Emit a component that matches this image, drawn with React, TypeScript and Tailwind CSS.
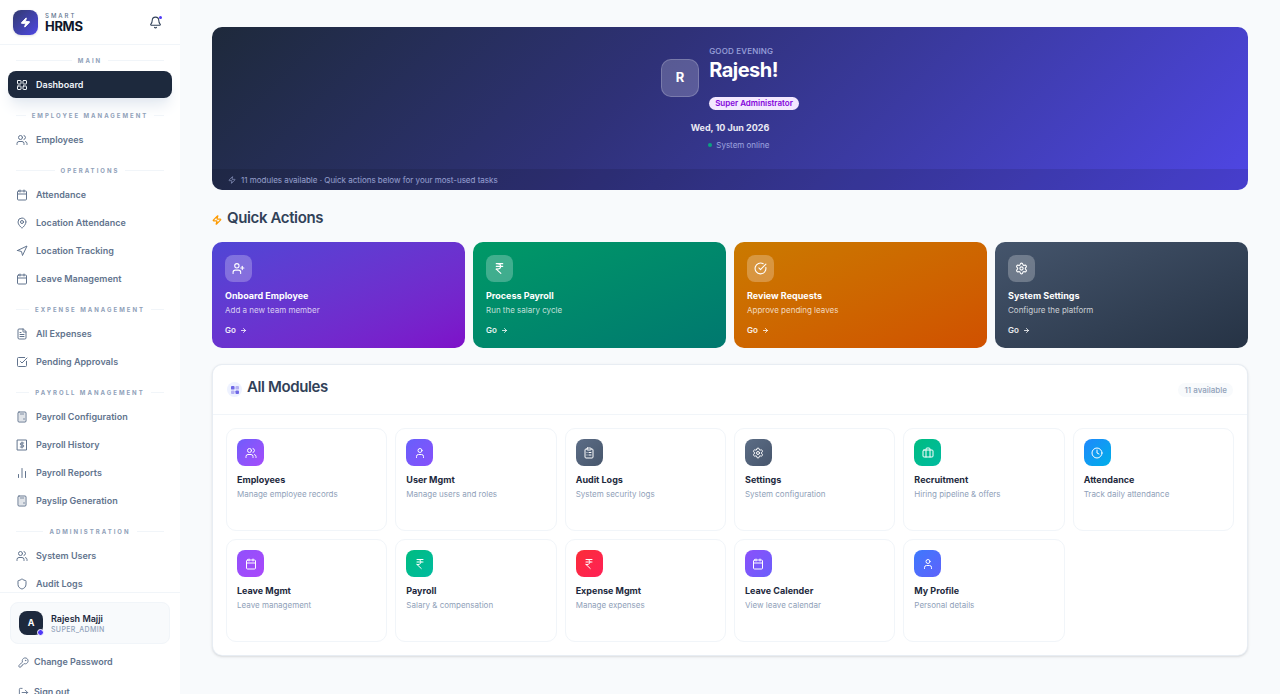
import {
  ArrowRight,
  Bell,
  Briefcase,
  Calculator,
  Calendar,
  ChartNoAxesColumn,
  CircleCheckBig,
  ClipboardList,
  Clock,
  FileText,
  IndianRupee,
  KeyRound,
  LayoutGrid,
  LogOut,
  MapPin,
  Navigation,
  Settings,
  Shield,
  SquareCheckBig,
  User,
  UserPlus,
  Users,
  Zap,
  type LucideIcon,
} from "lucide-react"
import type { ComponentType } from "react"

type IconType = LucideIcon | ComponentType<{ className?: string }>

const PayHistoryIcon = ({ className }: { className?: string }) => (
  <svg
    viewBox="0 0 24 24"
    fill="none"
    stroke="currentColor"
    strokeWidth="2"
    strokeLinecap="round"
    strokeLinejoin="round"
    className={className}
    aria-hidden="true"
  >
    <path d="M3 2h18v20H3z" />
    <path d="M15.5 8h-5a2 2 0 0 0 0 4h3a2 2 0 0 1 0 4h-5" />
    <path d="M12 6v12" />
  </svg>
)

const menu: { title: string; items: { label: string; icon: IconType }[] }[] = [
  { title: "Main", items: [{ label: "Dashboard", icon: LayoutGrid }] },
  {
    title: "Employee Management",
    items: [{ label: "Employees", icon: Users }],
  },
  {
    title: "Operations",
    items: [
      { label: "Attendance", icon: Calendar },
      { label: "Location Attendance", icon: MapPin },
      { label: "Location Tracking", icon: Navigation },
      { label: "Leave Management", icon: Calendar },
    ],
  },
  {
    title: "Expense Management",
    items: [
      { label: "All Expenses", icon: FileText },
      { label: "Pending Approvals", icon: SquareCheckBig },
    ],
  },
  {
    title: "Payroll Management",
    items: [
      { label: "Payroll Configuration", icon: Calculator },
      { label: "Payroll History", icon: PayHistoryIcon },
      { label: "Payroll Reports", icon: ChartNoAxesColumn },
      { label: "Payslip Generation", icon: Calculator },
    ],
  },
  {
    title: "Administration",
    items: [
      { label: "System Users", icon: Users },
      { label: "Audit Logs", icon: Shield },
    ],
  },
]

const quickActions: {
  title: string
  text: string
  icon: IconType
  color: string
}[] = [
  {
    title: "Onboard Employee",
    text: "Add a new team member",
    icon: UserPlus,
    color: "from-[#4f46d5] to-[#7e0fc9]",
  },
  {
    title: "Process Payroll",
    text: "Run the salary cycle",
    icon: IndianRupee,
    color: "from-[#009966] to-[#00786f]",
  },
  {
    title: "Review Requests",
    text: "Approve pending leaves",
    icon: CircleCheckBig,
    color: "from-[#ca7a00] to-[#d05000]",
  },
  {
    title: "System Settings",
    text: "Configure the platform",
    icon: Settings,
    color: "from-[#45556c] to-[#263345]",
  },
]

const modules: {
  title: string
  text: string
  icon: IconType
  color: string
}[] = [
  {
    title: "Employees",
    text: "Manage employee records",
    icon: Users,
    color: "from-[#6f5cfb] to-[#a44bfb]",
  },
  {
    title: "User Mgmt",
    text: "Manage users and roles",
    icon: User,
    color: "from-[#675ffb] to-[#8650fb]",
  },
  {
    title: "Audit Logs",
    text: "System security logs",
    icon: ClipboardList,
    color: "from-[#5c6d86] to-[#47566c]",
  },
  {
    title: "Settings",
    text: "System configuration",
    icon: Settings,
    color: "from-[#5c6d86] to-[#47566c]",
  },
  {
    title: "Recruitment",
    text: "Hiring pipeline & offers",
    icon: Briefcase,
    color: "from-[#00bc80] to-[#00bba0]",
  },
  {
    title: "Attendance",
    text: "Track daily attendance",
    icon: Clock,
    color: "from-[#1e88fc] to-[#00aee8]",
  },
  {
    title: "Leave Mgmt",
    text: "Leave management",
    icon: Calendar,
    color: "from-[#9050fb] to-[#aa48fb]",
  },
  {
    title: "Payroll",
    text: "Salary & compensation",
    icon: IndianRupee,
    color: "from-[#00bc80] to-[#00bba0]",
  },
  {
    title: "Expense Mgmt",
    text: "Manage expenses",
    icon: IndianRupee,
    color: "from-[#fb2c36] to-[#ff2056]",
  },
  {
    title: "Leave Calender",
    text: "View leave calendar",
    icon: Calendar,
    color: "from-[#8a50fb] to-[#6a5efb]",
  },
  {
    title: "My Profile",
    text: "Personal details",
    icon: User,
    color: "from-[#3b78fd] to-[#5d62fb]",
  },
]

const Sidebar = () => {
  return (
    <aside className="-mb-3 flex w-[180px] shrink-0 flex-col bg-white">
      <div className="flex h-[45px] shrink-0 items-center border-b border-slate-100 pr-[18px] pl-[13px]">
        <div className="flex size-[25px] items-center justify-center rounded-lg bg-linear-to-br from-[#33396f] to-[#4f46e5] shadow-sm">
          <Zap className="size-[11px] fill-white text-white" />
        </div>
        <div className="ml-[7px] flex-1">
          <p className="text-[6px] leading-[8px] font-medium tracking-[2px] text-slate-500 uppercase">
            Smart
          </p>
          <p className="text-[13px] leading-[13px] font-bold tracking-tight text-slate-900">
            HRMS
          </p>
        </div>
        <button aria-label="Notifications" className="relative text-slate-700">
          <Bell className="size-[13px]" />
          <span className="absolute top-0 right-0 size-[3px] rounded-full bg-indigo-600" />
        </button>
      </div>

      <nav className="min-h-0 flex-1 overflow-y-auto px-2 [scrollbar-width:none]">
        {menu.map((group) => (
          <div key={group.title} className="pt-3 first:pt-[10px]">
            <div className="mb-[5px] flex h-[11px] items-center gap-[6px] px-2">
              <span className="h-px flex-1 bg-slate-100" />
              <h2 className="text-[6px] leading-[11px] font-bold tracking-[2px] whitespace-nowrap text-slate-400 uppercase">
                {group.title}
              </h2>
              <span className="h-px flex-1 bg-slate-100" />
            </div>
            <div className="flex flex-col gap-px">
              {group.items.map((item) => (
                <a
                  key={item.label}
                  href="#"
                  className={
                    item.label === "Dashboard"
                      ? "flex h-[27px] items-center gap-2 rounded-lg bg-slate-800 px-2 text-[9px] font-semibold text-slate-100 shadow-lg shadow-slate-200"
                      : "flex h-[27px] items-center gap-2 rounded-lg px-2 text-[9px] font-semibold text-slate-500"
                  }
                >
                  <item.icon className="size-3" />
                  {item.label}
                </a>
              ))}
            </div>
          </div>
        ))}
      </nav>

      <div className="flex shrink-0 flex-col border-t border-slate-100 px-[10px] pt-[9px]">
        <div className="flex h-[42px] items-center gap-2 rounded-lg border border-slate-100 bg-slate-50 px-2">
          <div className="relative flex size-6 items-center justify-center rounded-lg bg-slate-800 text-[9px] font-bold text-white">
            A
            <span className="absolute -right-px -bottom-px size-[7px] rounded-full border border-white bg-indigo-600" />
          </div>
          <div>
            <p className="text-[9px] leading-[12px] font-semibold text-slate-800">
              Rajesh Majji
            </p>
            <p className="text-[7px] leading-[9px] font-medium tracking-wider text-slate-400">
              SUPER_ADMIN
            </p>
          </div>
        </div>
        <button className="mt-1 flex h-[28px] items-center gap-[5px] px-2 text-[9px] font-semibold text-slate-500">
          <KeyRound className="size-[11px]" />
          Change Password
        </button>
        <button className="mt-[2px] flex h-[28px] items-center gap-[5px] px-2 text-[9px] font-semibold text-slate-500">
          <LogOut className="size-[11px]" />
          Sign out
        </button>
      </div>
    </aside>
  )
}

const Hero = () => {
  return (
    <section className="overflow-hidden rounded-[10px] bg-linear-135 from-[#1e293b] via-[#2f3178] via-40% to-[#4f46e5]">
      <div className="flex flex-col items-center pt-[19px] pb-[18px]">
        <div className="flex items-center gap-[10px]">
          <div className="flex size-[38px] items-center justify-center rounded-[10px] border border-white/20 bg-white/20 text-[13px] font-bold text-white">
            R
          </div>
          <div className="flex flex-col items-start">
            <p className="text-[8px] leading-[10px] font-medium tracking-wide text-indigo-200/70 uppercase">
              Good evening
            </p>
            <h1 className="text-xl leading-[28px] font-bold tracking-tight text-white">
              Rajesh!
            </h1>
            <span className="mt-[13px] rounded-full bg-purple-100 px-[6px] text-[8px] leading-[13px] font-semibold text-purple-700">
              Super Administrator
            </span>
          </div>
        </div>
        <div className="mt-[11px] flex flex-col items-end">
          <p className="text-[9px] leading-[14px] font-bold text-white/90">
            Wed, 10 Jun 2026
          </p>
          <p className="mt-1 flex items-center gap-1 text-[8px] leading-[12px] text-indigo-200/70">
            <span className="size-1 rounded-full bg-emerald-500/80" />
            System online
          </p>
        </div>
      </div>
      <div className="flex h-[21px] items-center gap-[5px] bg-black/10 px-4 text-[8px] text-indigo-200/70">
        <Zap className="size-2" />
        <p>
          11 modules available · Quick actions below for your most-used tasks
        </p>
      </div>
    </section>
  )
}

const App = () => {
  return (
    <div className="flex h-screen overflow-hidden bg-slate-50 font-['Inter',sans-serif]">
      <Sidebar />
      <main className="min-w-0 flex-1 overflow-y-auto px-8 py-[27px] [scrollbar-width:none]">
        <Hero />

        <section>
          <div className="mt-4 flex h-6 items-center gap-[5px]">
            <Zap
              className="mt-[3px] size-[10px] text-amber-500"
              strokeWidth={3}
            />
            <h2 className="text-[15px] font-semibold tracking-tight text-slate-700">
              Quick Actions
            </h2>
          </div>
          <div className="mt-3 grid grid-cols-4 gap-2">
            {quickActions.map((action) => (
              <a
                key={action.title}
                href="#"
                className={`flex h-[106px] flex-col rounded-[10px] bg-linear-to-br p-[13px] text-white ${action.color}`}
              >
                <div className="flex size-[27px] shrink-0 items-center justify-center rounded-lg bg-white/25">
                  <action.icon className="size-[13px]" />
                </div>
                <h3 className="mt-[7px] text-[9px] leading-[14px] font-bold">
                  {action.title}
                </h3>
                <p className="text-[8px] leading-[14px] text-white/75">
                  {action.text}
                </p>
                <p className="mt-[7px] flex items-center gap-1 text-[8px] leading-[12px] font-semibold text-white/90">
                  Go <ArrowRight className="size-[7px]" strokeWidth={3} />
                </p>
              </a>
            ))}
          </div>
        </section>

        <section className="mt-4 rounded-[10px] border border-slate-200/80 bg-white shadow-sm">
          <div className="flex h-[50px] items-center justify-between border-b border-slate-100 px-[14px]">
            <div className="flex items-center gap-[5px]">
              <span className="flex size-[15px] items-center justify-center rounded-full bg-indigo-50">
                <svg viewBox="0 0 9 9" className="size-2" aria-hidden="true">
                  <rect width="4" height="4" rx="1" fill="#6f68e6" />
                  <rect x="5" width="4" height="4" rx="1" fill="#b5b1f3" />
                  <rect y="5" width="4" height="4" rx="1" fill="#b5b1f3" />
                  <rect x="5" y="5" width="4" height="4" rx="1" fill="#6f68e6" />
                </svg>
              </span>
              <h2 className="mb-1 text-[15px] font-semibold tracking-tight text-slate-700">
                All Modules
              </h2>
            </div>
            <span className="rounded-full bg-slate-50 px-[6px] text-[8px] leading-[14px] font-medium text-slate-400">
              11 available
            </span>
          </div>
          <div className="grid grid-cols-6 gap-2 p-[13px]">
            {modules.map((module) => (
              <a
                key={module.title}
                href="#"
                className="h-[103px] rounded-[10px] border border-slate-100 p-[10px]"
              >
                <div
                  className={`flex size-[27px] items-center justify-center rounded-lg bg-linear-to-br text-white ${module.color}`}
                >
                  <module.icon className="size-3" />
                </div>
                <h3 className="mt-[7px] text-[9px] leading-[14px] font-bold text-slate-800">
                  {module.title}
                </h3>
                <p className="text-[8px] leading-[14px] text-slate-400">
                  {module.text}
                </p>
              </a>
            ))}
          </div>
        </section>
      </main>
    </div>
  )
}

export default App
